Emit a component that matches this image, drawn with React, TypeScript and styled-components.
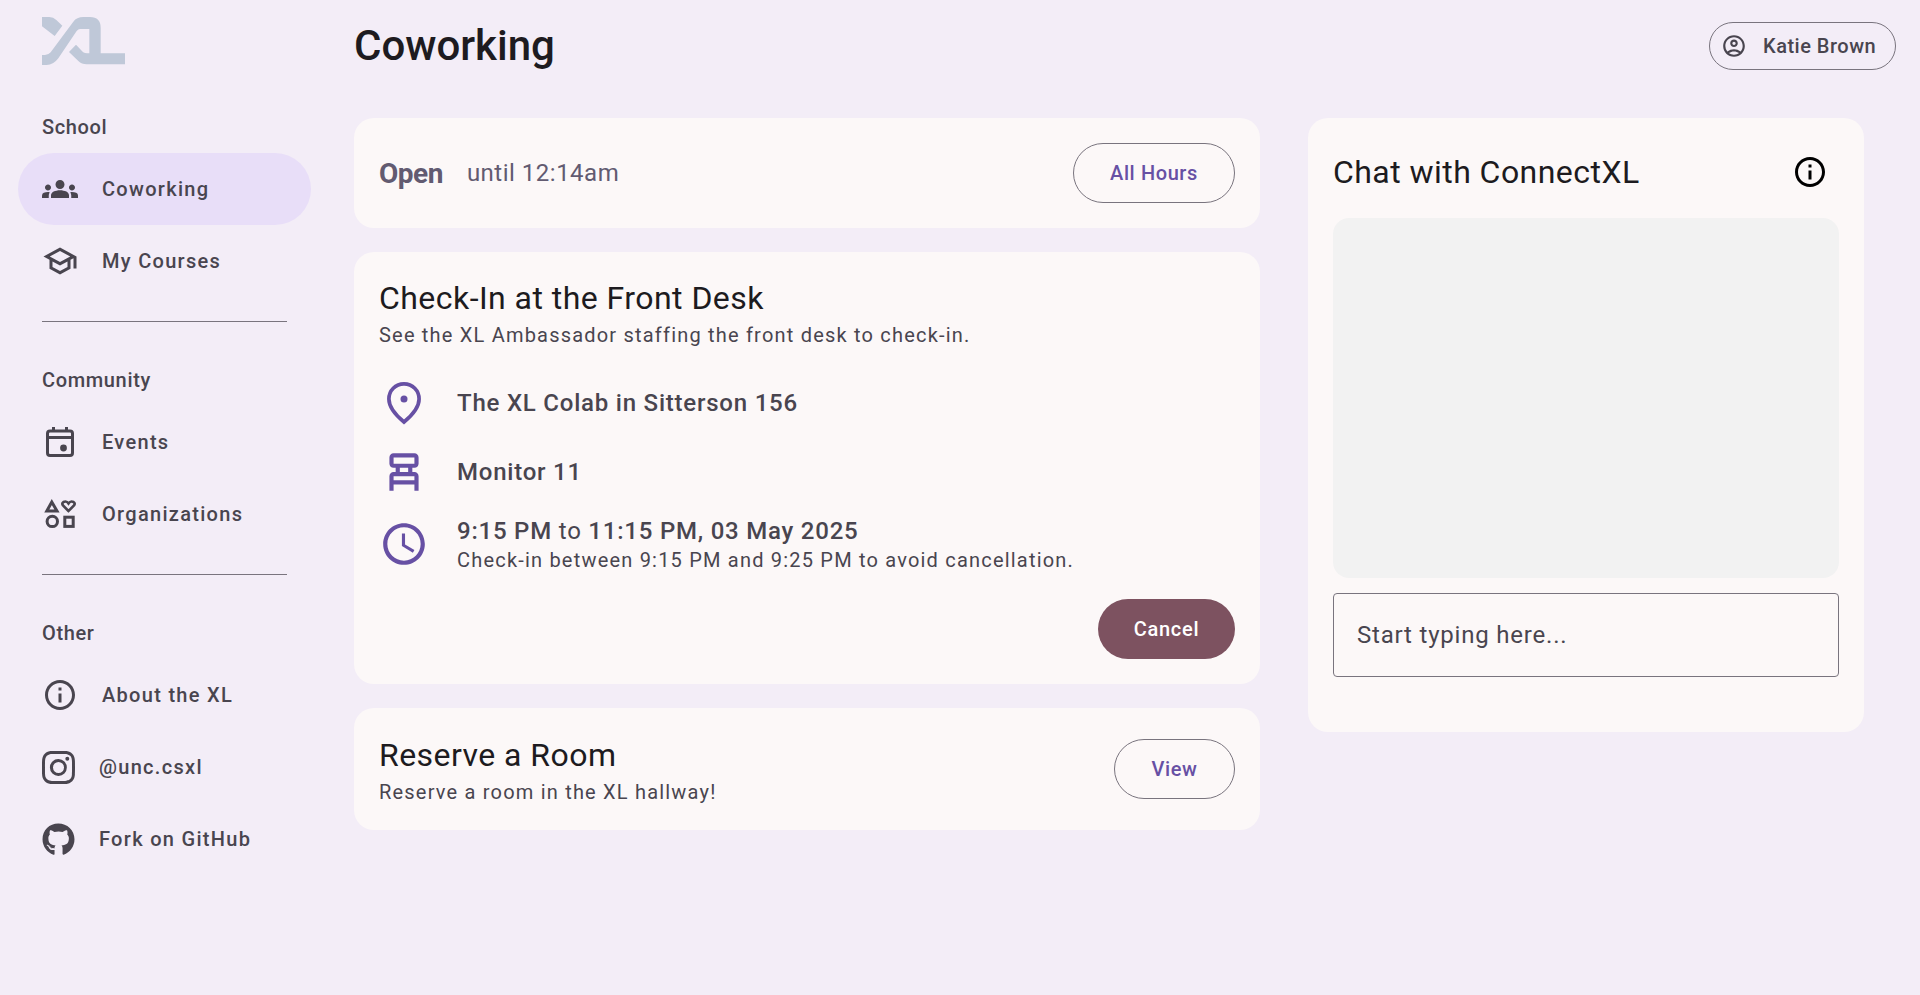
import * as React from 'react';
import styled, { createGlobalStyle } from 'styled-components';
import {
  MdGroups,
  MdOutlineSchool,
  MdInfoOutline,
  MdOutlineAccountCircle,
  MdOutlineChairAlt,
  MdOutlineSchedule,
} from 'react-icons/md';
import { FaGithub } from 'react-icons/fa';
import { BsInstagram } from 'react-icons/bs';

const GlobalStyle = createGlobalStyle`
  * { box-sizing: border-box; }
  html, body { margin: 0; padding: 0; }
  body {
    background: #f3edf7;
    color: #49454f;
    font-family: Roboto, "Liberation Sans", sans-serif;
  }
`;

const Page = styled('div')`
  display: flex;
  min-height: 995px;
  background: #f3edf7;
`;

const Sidebar = styled('nav')`
  width: 354px;
  flex-shrink: 0;
  padding-top: 17px;
`;

const LogoMark = styled('svg')`
  display: block;
  width: 83px;
  height: 48px;
  margin-left: 42px;
  margin-bottom: 52px;
`;

const SectionLabel = styled('div')`
  margin-left: 42px;
  margin-bottom: 16px;
  font-size: 20px;
  line-height: 20px;
  font-weight: 500;
  letter-spacing: 0.65px;
`;

const NavItem = styled('a')<{ $active?: boolean }>`
  display: flex;
  align-items: center;
  width: 293px;
  height: 72px;
  margin-left: 18px;
  padding-left: 24px;
  gap: 24px;
  border-radius: 36px;
  background: ${(p) => (p.$active ? '#e8def8' : 'transparent')};
  font-size: 20px;
  font-weight: 500;
  letter-spacing: 1.3px;
  color: #49454f;
`;

const NavIcon = styled('span')<{ $brand?: boolean }>`
  display: flex;
  align-items: center;
  justify-content: center;
  width: ${(p) => (p.$brand ? '33px' : '36px')};
  font-size: ${(p) => (p.$brand ? '33px' : '36px')};
`;

const Divider = styled('hr')`
  width: 245px;
  height: 1px;
  margin: 24px 0 48px 42px;
  border: 0;
  background: #79747e;
`;

const Main = styled('main')`
  flex: 1;
  padding-right: 24px;
`;

const Header = styled('header')`
  display: flex;
  align-items: center;
  justify-content: space-between;
  height: 92px;
  padding-bottom: 1px;
  margin-bottom: 26px;
`;

const PageTitle = styled('h1')`
  margin: 0;
  font-size: 42px;
  line-height: 48px;
  font-weight: 500;
  color: #1d1b20;
`;

const ProfileButton = styled('button')`
  display: flex;
  align-items: center;
  gap: 16px;
  height: 48px;
  width: 187px;
  padding: 0 0 0 11px;
  border: 1px solid #79747e;
  border-radius: 24px;
  background: transparent;
  font-family: inherit;
  font-size: 20px;
  font-weight: 500;
  letter-spacing: 0.5px;
  color: #49454f;
  svg { font-size: 26px; }
`;

const Columns = styled('div')`
  display: flex;
  align-items: flex-start;
  gap: 48px;
  width: 1510px;
`;

const LeftColumn = styled('div')`
  display: flex;
  flex-direction: column;
  gap: 24px;
  width: 906px;
`;

const Card = styled('section')`
  background: #fcf8f8;
  border-radius: 20px;
  padding: 25px;
`;

const HoursCard = styled(Card)`
  display: flex;
  align-items: center;
  justify-content: space-between;
  height: 110px;
`;

const HoursText = styled('div')`
  display: flex;
  align-items: center;
  gap: 24px;
`;

const OpenLabel = styled('span')`
  font-size: 28px;
  font-weight: 700;
  letter-spacing: -0.5px;
  color: #625b71;
`;

const UntilLabel = styled('span')`
  font-size: 24px;
  letter-spacing: 0.5px;
  color: #625b71;
`;

const OutlineButton = styled('button')<{ $width: number }>`
  width: ${(p) => p.$width}px;
  height: 60px;
  border: 1px solid #79747e;
  border-radius: 30px;
  background: transparent;
  font-family: inherit;
  font-size: 20px;
  font-weight: 500;
  letter-spacing: 0.6px;
  color: #6750a4;
`;

const CardTitle = styled('h2')`
  margin: 0 0 4px;
  font-size: 32px;
  line-height: 42px;
  font-weight: 400;
  letter-spacing: 0.45px;
  color: #1d1b20;
`;

const CardSubtitle = styled('p')`
  margin: 0;
  font-size: 20px;
  line-height: 24px;
  letter-spacing: 1.2px;
  color: #49454f;
`;

const DetailList = styled('div')`
  display: flex;
  flex-direction: column;
  margin-top: 21px;
`;

const DetailRow = styled('div')<{ $height: number }>`
  display: flex;
  align-items: center;
  gap: 28px;
  height: ${(p) => p.$height}px;
`;

const DetailIcon = styled('span')`
  display: flex;
  align-items: center;
  justify-content: center;
  width: 50px;
  font-size: 50px;
  color: #6750a4;
`;

const DetailText = styled('div')`
  font-size: 24px;
  line-height: 30px;
  font-weight: 500;
  letter-spacing: 0.78px;
  color: #49454f;
`;

const LightWord = styled('span')`
  font-weight: 400;
`;

const DetailNote = styled('div')`
  margin-top: 2px;
  font-size: 20px;
  line-height: 24px;
  font-weight: 400;
  letter-spacing: 1.2px;
`;

const ActionRow = styled('div')`
  display: flex;
  justify-content: flex-end;
  margin-top: 17px;
`;

const CancelButton = styled('button')`
  width: 137px;
  height: 60px;
  border: 0;
  border-radius: 30px;
  background: #7d5260;
  font-family: inherit;
  font-size: 20px;
  font-weight: 500;
  letter-spacing: 0.7px;
  color: #ffffff;
`;

const RoomCard = styled(Card)`
  display: flex;
  align-items: center;
  justify-content: space-between;
  height: 122px;
`;

const ChatCard = styled(Card)`
  width: 556px;
  height: 614px;
`;

const ChatHeader = styled('div')`
  display: flex;
  align-items: center;
  justify-content: space-between;
  height: 58px;
  margin-bottom: 17px;
  h2 { margin: 0; }
`;

const ChatInfo = styled('span')`
  display: flex;
  margin-right: 11px;
  font-size: 36px;
  color: #000000;
`;

const ChatLog = styled('div')`
  height: 360px;
  margin-bottom: 15px;
  border-radius: 16px;
  background: #f2f2f2;
`;

const ChatInput = styled('div')`
  display: flex;
  align-items: center;
  height: 84px;
  padding-left: 23px;
  border: 1px solid #79747e;
  border-radius: 4px;
  font-size: 24px;
  letter-spacing: 0.8px;
  color: #49454f;
`;

const Logo = () => (
  <LogoMark viewBox="36 36 249 144" aria-label="XL logo">
    <path
      fill="#bfc8d8"
      d="M36 36H58Q70 36 79 45L97 62L74 93L36 64ZM36 150H45Q55 150 62 142L130 50Q140 36 160 36H180Q212 36 212 68V145H285V178H170Q155 178 145 168L117 141L138 119L158 140Q163 145 178 145V72H150Q145 72 140 78L85 160Q70 180 50 180H36Z"
    />
  </LogoMark>
);

const PinIcon = () => (
  <svg width="36" height="44" viewBox="0 0 36 44" fill="none" stroke="currentColor" strokeWidth="3.7" strokeLinejoin="miter">
    <path d="M18 41C9.500 34 2.900 26 2.900 18C2.900 9.500 9.500 2.900 18 2.900C26.500 2.900 33.100 9.500 33.100 18C33.100 26 26.500 34 18 41Z" />
    <circle cx="18" cy="18" r="3.500" fill="currentColor" stroke="none" />
  </svg>
);

const EventIcon = () => (
  <svg width="36" height="36" viewBox="0 0 36 36" fill="none" stroke="currentColor" strokeWidth="3">
    <rect x="5.500" y="7" width="25" height="24.500" rx="2.500" />
    <path d="M5.500 13.500H30.500M11.500 3V7M24.500 3V7" />
    <circle cx="21.500" cy="24" r="3.400" fill="currentColor" stroke="none" />
  </svg>
);

const InterestsIcon = () => (
  <svg width="36" height="36" viewBox="0 0 36 36" fill="none" stroke="currentColor" strokeWidth="3">
    <path d="M9.800 6L4.800 15H15Z" />
    <path strokeWidth="2.600" d="M26.500 15L21 9.500Q19.500 7.500 21.500 6Q24.500 4.500 26.500 7.500Q28.500 4.500 31.500 6Q33.500 7.500 32 9.500Z" />
    <circle cx="10.300" cy="25.400" r="5.200" />
    <rect x="22.800" y="21.200" width="8.400" height="9.200" />
  </svg>
);

export default function App() {
  return (
    <Page>
      <GlobalStyle />
      <Sidebar>
        <Logo />
        <SectionLabel>School</SectionLabel>
        <NavItem $active>
          <NavIcon><MdGroups /></NavIcon>
          Coworking
        </NavItem>
        <NavItem>
          <NavIcon><MdOutlineSchool /></NavIcon>
          My Courses
        </NavItem>
        <Divider />
        <SectionLabel>Community</SectionLabel>
        <NavItem>
          <NavIcon><EventIcon /></NavIcon>
          Events
        </NavItem>
        <NavItem>
          <NavIcon><InterestsIcon /></NavIcon>
          Organizations
        </NavItem>
        <Divider />
        <SectionLabel>Other</SectionLabel>
        <NavItem>
          <NavIcon><MdInfoOutline /></NavIcon>
          About the XL
        </NavItem>
        <NavItem>
          <NavIcon $brand><BsInstagram /></NavIcon>
          @unc.csxl
        </NavItem>
        <NavItem>
          <NavIcon $brand><FaGithub /></NavIcon>
          Fork on GitHub
        </NavItem>
      </Sidebar>
      <Main>
        <Header>
          <PageTitle>Coworking</PageTitle>
          <ProfileButton>
            <MdOutlineAccountCircle />
            Katie Brown
          </ProfileButton>
        </Header>
        <Columns>
          <LeftColumn>
            <HoursCard>
              <HoursText>
                <OpenLabel>Open</OpenLabel>
                <UntilLabel>until 12:14am</UntilLabel>
              </HoursText>
              <OutlineButton $width={162}>All Hours</OutlineButton>
            </HoursCard>
            <Card>
              <CardTitle>Check-In at the Front Desk</CardTitle>
              <CardSubtitle>See the XL Ambassador staffing the front desk to check-in.</CardSubtitle>
              <DetailList>
                <DetailRow $height={69}>
                  <DetailIcon><PinIcon /></DetailIcon>
                  <DetailText>The XL Colab in Sitterson 156</DetailText>
                </DetailRow>
                <DetailRow $height={69}>
                  <DetailIcon><MdOutlineChairAlt /></DetailIcon>
                  <DetailText>Monitor 11</DetailText>
                </DetailRow>
                <DetailRow $height={76}>
                  <DetailIcon><MdOutlineSchedule /></DetailIcon>
                  <DetailText>
                    9:15 PM <LightWord>to</LightWord> 11:15 PM, 03 May 2025
                    <DetailNote>Check-in between 9:15 PM and 9:25 PM to avoid cancellation.</DetailNote>
                  </DetailText>
                </DetailRow>
              </DetailList>
              <ActionRow>
                <CancelButton>Cancel</CancelButton>
              </ActionRow>
            </Card>
            <RoomCard>
              <div>
                <CardTitle>Reserve a Room</CardTitle>
                <CardSubtitle>Reserve a room in the XL hallway!</CardSubtitle>
              </div>
              <OutlineButton $width={121}>View</OutlineButton>
            </RoomCard>
          </LeftColumn>
          <ChatCard>
            <ChatHeader>
              <CardTitle>Chat with ConnectXL</CardTitle>
              <ChatInfo><MdInfoOutline /></ChatInfo>
            </ChatHeader>
            <ChatLog />
            <ChatInput>Start typing here...</ChatInput>
          </ChatCard>
        </Columns>
      </Main>
    </Page>
  );
}
